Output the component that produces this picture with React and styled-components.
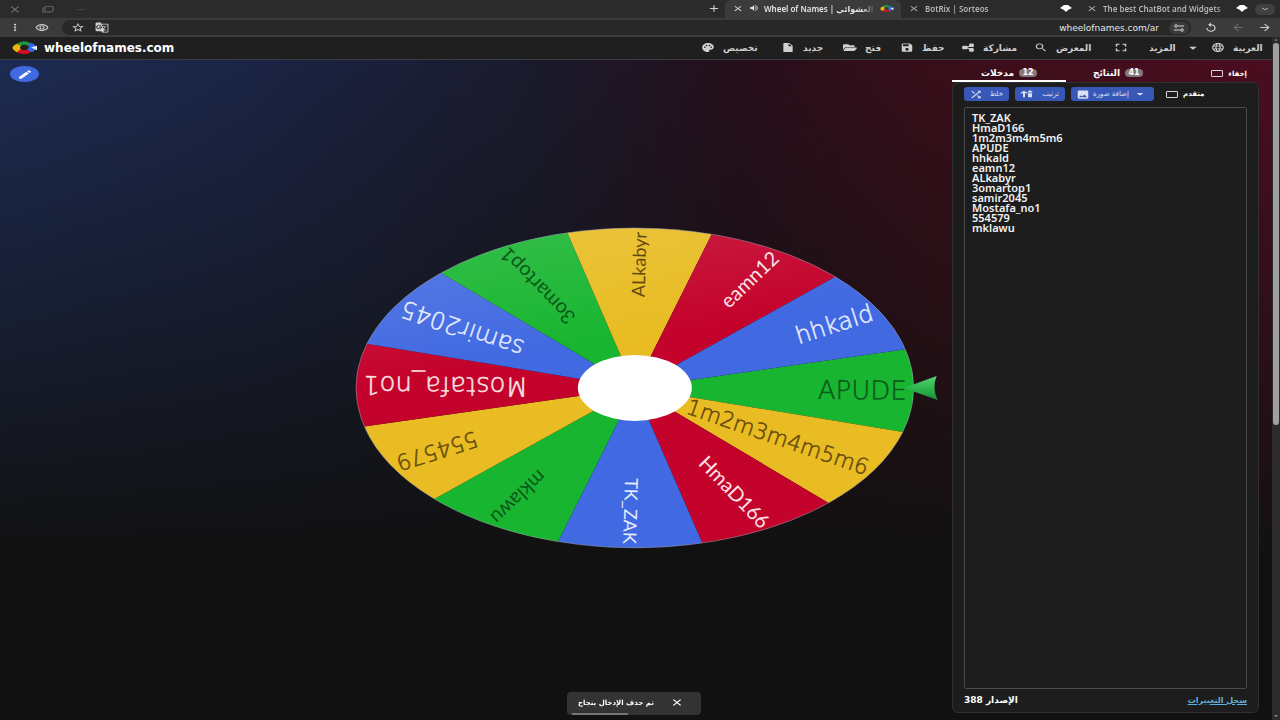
import React from "react";
import styled, { createGlobalStyle } from "styled-components";
import {
  MdPalette,
  MdInsertDriveFile,
  MdSave,
  MdSearch,
  MdFullscreen,
  MdArrowDropDown,
  MdLanguage,
  MdClose,
  MdAdd,
  MdMoreVert,
  MdStarBorder,
  MdArrowBack,
  MdArrowForward,
  MdReplay,
  MdVolumeUp,
  MdKeyboardArrowDown,
  MdShuffle,
  MdImage,
  MdEdit,
  MdOutlineFilterNone,
  MdRemove,
  MdGTranslate,
  MdOutlineRemoveRedEye,
} from "react-icons/md";
import { FaFolderOpen } from "react-icons/fa";

const GlobalStyle = createGlobalStyle`
  * {
    box-sizing: border-box;
  }
  body {
    margin: 0;
    background: #101010;
    color: #fff;
    font-family: "DejaVu Sans", sans-serif;
  }
  button {
    border: 0;
    padding: 0;
    background: none;
    color: inherit;
    font-family: inherit;
  }
`;

const Page = styled.div`
  display: flex;
  flex-direction: column;
  height: 100vh;
  overflow: hidden;
`;

const Icon = styled.span`
  display: inline-flex;
  flex: none;
  width: ${(p) => p.$w || 14}px;
  height: ${(p) => p.$h || 11}px;
  color: ${(p) => p.$color || "inherit"};
  transform: ${(p) => (p.$flip ? "rotate(180deg)" : "none")};
  svg {
    width: 100%;
    height: 100%;
  }
`;

/* browser chrome */

const TabStrip = styled.div`
  display: flex;
  justify-content: space-between;
  height: 18px;
  background: #2b2b2b;
  color: #d0d0d0;
`;

const WindowButtons = styled.div`
  display: flex;
  align-items: center;
  gap: 20px;
  padding-left: 8px;
  color: #707070;
`;

const Tabs = styled.div`
  display: flex;
  align-items: center;
  width: 578px;
`;

const NewTab = styled.button`
  width: 23px;
  height: 16px;
`;

const Tab = styled.div`
  display: flex;
  align-items: center;
  gap: 5px;
  width: ${(p) => p.$w}px;
  height: 18px;
  padding: 0 7px 2px;
  border-radius: 6px 6px 0 0;
  background: ${(p) => (p.$active ? "#3b3b3b" : "transparent")};
  font: 600 8px "Noto Sans", "DejaVu Sans", sans-serif;
  color: ${(p) => (p.$active ? "#e4e4e4" : "#b4b4b4")};
  white-space: nowrap;
`;

const TabTitle = styled.span`
  flex: 1;
  overflow: hidden;
  mask-image: linear-gradient(to right, #000 88%, transparent);
`;

const Chevron = styled.button`
  display: flex;
  align-items: center;
  justify-content: center;
  width: 20px;
  height: 11px;
  border-radius: 6px;
  background: #404040;
`;

const AddressBar = styled.div`
  display: flex;
  align-items: center;
  gap: 13px;
  height: 19px;
  padding: 0 8px;
  background: #3b3b3b;
  color: #d0d0d0;
`;

const Omnibox = styled.div`
  display: flex;
  flex: 1;
  align-items: center;
  gap: 10px;
  height: 15px;
  padding: 0 2px 0 9px;
  border-radius: 8px;
  background: #282828;
`;

const UrlInput = styled.input`
  flex: 1;
  min-width: 0;
  border: 0;
  padding: 0;
  background: none;
  color: #e6e6e6;
  font: 500 9px "DejaVu Sans", sans-serif;
  text-align: right;
`;

const SiteInfo = styled.button`
  display: flex;
  align-items: center;
  justify-content: center;
  width: 20px;
  height: 12px;
  border-radius: 6px;
  background: #3b3b3b;
`;

/* site */

const Site = styled.div`
  display: flex;
  flex: 1;
  min-height: 0;
`;

const Content = styled.div`
  display: flex;
  flex: 1;
  flex-direction: column;
  min-width: 0;
`;

const Header = styled.header`
  display: flex;
  align-items: center;
  justify-content: space-between;
  height: 23px;
  padding: 0 7px 1px 12px;
  border-bottom: 1px solid #3a3a42;
  background: #1f1f1f;
`;

const Brand = styled.a`
  display: flex;
  align-items: center;
  gap: 6px;
  color: #fff;
  font: bold 12px "DejaVu Sans", sans-serif;
  text-decoration: none;
`;

const Menu = styled.nav`
  display: flex;
  align-items: center;
`;

const MenuButton = styled.button`
  display: flex;
  align-items: center;
  gap: 8px;
  width: ${(p) => p.$w}px;
  height: 18px;
  color: #cfcfcf;
  font-size: 9px;
  font-weight: bold;
  white-space: nowrap;
`;

const Stage = styled.main`
  display: grid;
  grid-template-columns: 1fr 44% 1fr;
  flex: 1;
  min-height: 0;
  background:
    linear-gradient(to bottom, transparent, #11111180 260px, #111 500px),
    linear-gradient(to right, #1d2b52, #1b2445 20%, #1a1a2c 42%, #260f1b 58%, #3a0e19 75%, #4c0d20);
`;

const EditButton = styled.button`
  display: flex;
  align-items: center;
  justify-content: center;
  width: 29px;
  height: 16px;
  margin: 6px 0 0 10px;
  border-radius: 50%;
  background: #4169e1;
`;

const WheelSvg = styled.svg`
  align-self: center;
  width: 100%;
  margin-bottom: 4px;
  overflow: visible;
`;

const WheelLabel = styled.text`
  font-family: ${(p) => (p.$steep ? "Lato" : '"DejaVu Sans"')}, sans-serif;
  font-weight: ${(p) => (p.$steep ? 400 : 200)};
  font-size: ${(p) => p.$size}px;
  fill: ${(p) => p.$color};
  stroke: ${(p) => (p.$steep ? "none" : p.$color)};
  stroke-width: 0.5;
`;

const Sidebar = styled.aside`
  display: flex;
  flex-direction: column;
  justify-self: end;
  width: 307px;
  margin: 5px 13px 7px 0;
  min-height: 0;
`;

const SideTabs = styled.div`
  display: flex;
  align-items: center;
  height: 17px;
`;

const SideTab = styled.button`
  display: flex;
  align-items: center;
  justify-content: center;
  gap: 5px;
  width: ${(p) => p.$w}px;
  height: 17px;
  border-bottom: 2px solid ${(p) => (p.$active ? "#fff" : "transparent")};
  font-size: 9px;
  font-weight: bold;
`;

const Badge = styled.span`
  width: 18px;
  height: 8px;
  border-radius: 4px;
  background: #85787c;
  font: bold 8px/8px "DejaVu Sans", sans-serif;
`;

const CheckLabel = styled.label`
  display: flex;
  align-items: center;
  gap: 5px;
  margin-left: ${(p) => (p.$push ? "auto" : "6px")};
  margin-right: ${(p) => (p.$push ? "12px" : "0")};
  font-size: 7px;
  font-weight: bold;
`;

const Checkbox = styled.input`
  appearance: none;
  width: 12px;
  height: 7px;
  margin: 0;
  border: 1px solid #d8d8d8;
  border-radius: 1px;
`;

const Panel = styled.section`
  display: flex;
  flex: 1;
  flex-direction: column;
  min-height: 0;
  padding: 4px 11px 3px;
  border: 1px solid #303030;
  border-radius: 6px;
  background: #1d1d1d;
`;

const Toolbar = styled.div`
  display: flex;
  align-items: center;
  gap: 6px;
`;

const ToolButton = styled.button`
  display: flex;
  align-items: center;
  justify-content: space-between;
  width: ${(p) => p.$w}px;
  height: 14px;
  padding: 0 6px 0 5px;
  border-radius: 3px;
  background: #3858b8;
  color: #dbe2f7;
  font-size: 7px;
  white-space: nowrap;
`;

const Entries = styled.textarea`
  flex: 1;
  min-height: 0;
  margin: 6px 0 0;
  padding: 5px 7px;
  border: 1px solid #4a4a4a;
  border-radius: 2px;
  outline: 0;
  background: #1d1d1d;
  color: #f2f2f2;
  font: 600 11px/10px "Noto Sans", sans-serif;
  resize: none;
`;

const Footer = styled.footer`
  display: flex;
  align-items: center;
  justify-content: space-between;
  height: 18px;
  margin-top: 2px;
  font-size: 9px;
  font-weight: bold;
`;

const ChangeLog = styled.a`
  color: #62b0d8;
  font-size: 8px;
`;

const Scrollbar = styled.div`
  display: flex;
  flex-direction: column;
  align-items: center;
  width: 8px;
  background: #2b2b2b;
  color: #a8a8a8;
`;

const Thumb = styled.div`
  width: 6px;
  height: 56%;
  margin-bottom: auto;
  border-radius: 3px;
  background: #a0a0a0;
`;

const ToastArea = styled.div`
  position: fixed;
  right: 12px;
  bottom: 5px;
  left: 0;
  display: flex;
  justify-content: center;
  pointer-events: none;
`;

const Toast = styled.div`
  display: flex;
  align-items: center;
  justify-content: space-between;
  width: 134px;
  height: 23px;
  padding: 0 17px 2px 11px;
  border-radius: 4px;
  background:
    linear-gradient(#757575, #757575) 5px 21px / 56px 2px no-repeat,
    #333;
  font-size: 7px;
  font-weight: bold;
`;

const GREEN = "#18b530";
const BLUE = "#4169e1";
const RED = "#c4032c";
const YELLOW = "#e8bc22";

const RX = 279;
const RY = 160;

// clockwise, starting under the pointer
const slices = [
  { name: "APUDE", color: GREEN, size: 26 },
  { name: "1m2m3m4m5m6", color: YELLOW, size: 22 },
  { name: "HmaD166", color: RED, size: 20, steep: true },
  { name: "TK_ZAK", color: BLUE, size: 18, steep: true },
  { name: "mklawu", color: GREEN, size: 20, steep: true },
  { name: "554579", color: YELLOW, size: 22 },
  { name: "Mostafa_no1", color: RED, size: 26 },
  { name: "samir2045", color: BLUE, size: 24 },
  { name: "3omartop1", color: GREEN, size: 20, steep: true },
  { name: "ALkabyr", color: YELLOW, size: 18, steep: true },
  { name: "eamn12", color: RED, size: 20, steep: true },
  { name: "hhkald", color: BLUE, size: 24 },
];

const labelColors = {
  [GREEN]: "#0c5a1a",
  [YELLOW]: "#64490c",
  [RED]: "#fbe3e8",
  [BLUE]: "#e6edff",
};

const entries = [
  "TK_ZAK",
  "HmaD166",
  "1m2m3m4m5m6",
  "APUDE",
  "hhkald",
  "eamn12",
  "ALkabyr",
  "3omartop1",
  "samir2045",
  "Mostafa_no1",
  "554579",
  "mklawu",
];

const point = (deg, scale = 1) => {
  const a = (deg * Math.PI) / 180;
  return [RX * scale * Math.cos(a), RY * scale * Math.sin(a)];
};

const slicePath = (deg) => {
  const [x1, y1] = point(deg - 15);
  const [x2, y2] = point(deg + 15);
  return `M0 0L${x1} ${y1}A${RX} ${RY} 0 0 1 ${x2} ${y2}Z`;
};

function Wheel() {
  return (
    <WheelSvg viewBox="-279 -161 560 322" role="img" aria-label="Wheel">
      <defs>
        <linearGradient id="sheen" x1="0.2" y1="0" x2="0.5" y2="1">
          <stop offset="0" stopColor="#fff" stopOpacity="0.12" />
          <stop offset="0.4" stopColor="#fff" stopOpacity="0" />
        </linearGradient>
        <linearGradient id="pointer" x1="0" y1="0" x2="0" y2="1">
          <stop offset="0" stopColor="#5ad077" />
          <stop offset="0.5" stopColor="#2fb850" />
          <stop offset="1" stopColor="#1c8a38" />
        </linearGradient>
      </defs>
      {slices.map((s, i) => (
        <path key={s.name} d={slicePath(1 + i * 30)} fill={s.color} />
      ))}
      <ellipse rx={RX} ry={RY} fill="url(#sheen)" stroke="#9aa3b0" strokeOpacity="0.5" />
      {slices.map((s, i) => {
        const [x, y] = point(1 + i * 30, 0.975);
        const angle = (Math.atan2(y, x) * 180) / Math.PI;
        return (
          <WheelLabel
            key={s.name}
            $size={s.size}
            $steep={s.steep}
            $color={labelColors[s.color]}
            textAnchor="end"
            dominantBaseline="central"
            transform={`translate(${x} ${y}) rotate(${angle})`}
          >
            {s.name}
          </WheelLabel>
        );
      })}
      <ellipse rx="57" ry="33" fill="#fff" />
      <path d="M269 0L302 -12Q297 0 303 12Z" fill="url(#pointer)" />
    </WheelSvg>
  );
}

function Logo({ w = 26, h = 13 }) {
  return (
    <svg width={w} height={h} viewBox="0 0 26 14" preserveAspectRatio="none">
      <path d="M5 3Q11 -2 18 2L16 5Q12 3 9 5Z" fill="#1a9a3c" />
      <path d="M5 3L9 5Q7 7 9 9L5 12Q-4 7 5 3Z" fill="#eeb211" />
      <path d="M5 12L9 9Q12 11 15 9L19 12Q12 16 5 12Z" fill="#d50f25" />
      <path d="M18 2Q24 3 24 7Q24 11 19 12L15 9Q18 7 16 5Z" fill="#3369e8" />
      <path d="M19 7L25 5L25 10Z" fill="#e8eefc" />
    </svg>
  );
}

function BotIcon() {
  return (
    <svg width="12" height="7" viewBox="0 0 12 7">
      <path d="M4 0H8L12 3L8 5L6 7L4 5L0 3Z" fill="#fff" />
    </svg>
  );
}

function ShareIcon(props) {
  return (
    <svg viewBox="0 0 24 24" fill="currentColor" {...props}>
      <rect x="2" y="8" width="9" height="8" rx="2" />
      <path d="M9 12L18 7M9 12L18 17" stroke="currentColor" strokeWidth="2" />
      <rect x="14" y="3" width="8" height="8" rx="2" />
      <rect x="14" y="13" width="8" height="8" rx="2" />
    </svg>
  );
}

function TuneIcon(props) {
  return (
    <svg viewBox="0 0 12 8" fill="none" stroke="currentColor" {...props}>
      <circle cx="3" cy="2" r="1.3" />
      <path d="M5 2H11M1 6H7" />
      <circle cx="9" cy="6" r="1.3" />
    </svg>
  );
}

function SortIcon(props) {
  return (
    <svg viewBox="0 0 14 10" fill="currentColor" {...props}>
      <path d="M4 1L8 4H5V9H3V4H0Z" />
      <path d="M10 0L13 3H7ZM8 4H12V9H8Z" />
    </svg>
  );
}

const menu = [
  { label: "تخصيص", icon: MdPalette, w: 80 },
  { label: "جديد", icon: MdInsertDriveFile, w: 62 },
  { label: "فتح", icon: FaFolderOpen, w: 57 },
  { label: "حفظ", icon: MdSave, w: 61 },
  { label: "مشاركة", icon: ShareIcon, w: 73 },
  { label: "المعرض", icon: MdSearch, w: 78 },
];

function Glyph({ svg: Svg, ...rest }) {
  return (
    <Icon {...rest}>
      <Svg preserveAspectRatio="none" />
    </Icon>
  );
}

function App() {
  return (
    <Page>
      <GlobalStyle />
      <TabStrip>
        <WindowButtons>
          <Glyph svg={MdClose} />
          <Glyph svg={MdOutlineFilterNone} $w={12} $h={7} />
          <Glyph svg={MdRemove} $color="#484848" />
        </WindowButtons>
        <Tabs>
          <NewTab aria-label="New tab">
            <Glyph svg={MdAdd} />
          </NewTab>
          <Tab $active $w={176}>
            <Glyph svg={MdClose} $w={12} $h={9} />
            <Glyph svg={MdVolumeUp} $w={10} $h={8} />
            <TabTitle>Wheel of Names | العشوائي</TabTitle>
            <Logo w={14} h={7} />
          </Tab>
          <Tab $w={178}>
            <Glyph svg={MdClose} $w={12} $h={9} />
            <TabTitle>BotRix | Sorteos</TabTitle>
            <BotIcon />
          </Tab>
          <Tab $w={176}>
            <Glyph svg={MdClose} $w={12} $h={9} />
            <TabTitle>The best ChatBot and Widgets</TabTitle>
            <BotIcon />
          </Tab>
          <Chevron aria-label="Search tabs">
            <Glyph svg={MdKeyboardArrowDown} $w={12} $h={8} />
          </Chevron>
        </Tabs>
      </TabStrip>
      <AddressBar>
        <Glyph svg={MdMoreVert} />
        <Glyph svg={MdOutlineRemoveRedEye} />
        <Omnibox>
          <Glyph svg={MdStarBorder} />
          <Glyph svg={MdGTranslate} />
          <UrlInput aria-label="Address" defaultValue="wheelofnames.com/ar" />
          <SiteInfo aria-label="Site information">
            <Glyph svg={TuneIcon} $w={12} $h={8} />
          </SiteInfo>
        </Omnibox>
        <Glyph svg={MdReplay} />
        <Glyph svg={MdArrowBack} $color="#6c6c6c" />
        <Glyph svg={MdArrowForward} />
      </AddressBar>

      <Site>
        <Content>
          <Header>
            <Brand href="#">
              <Logo />
              wheelofnames.com
            </Brand>
            <Menu>
              {menu.map((m) => (
                <MenuButton key={m.label} $w={m.w}>
                  <Glyph svg={m.icon} $h={m.icon === FaFolderOpen ? 9 : 11} />
                  {m.label}
                </MenuButton>
              ))}
              <MenuButton $w={37} aria-label="Fullscreen">
                <Glyph svg={MdFullscreen} $w={18} $h={13} />
              </MenuButton>
              <MenuButton $w={62}>
                المزيد
                <Glyph svg={MdArrowDropDown} $w={18} $h={14} />
              </MenuButton>
              <MenuButton $w={54}>
                <Glyph svg={MdLanguage} />
                العربية
              </MenuButton>
            </Menu>
          </Header>

          <Stage>
            <EditButton aria-label="Edit">
              <Glyph svg={MdEdit} $w={16} />
            </EditButton>
            <Wheel />
            <Sidebar>
              <SideTabs>
                <SideTab $active $w={114}>
                  مدخلات <Badge>12</Badge>
                </SideTab>
                <SideTab $w={104}>
                  النتائج <Badge>41</Badge>
                </SideTab>
                <CheckLabel $push>
                  <Checkbox type="checkbox" />
                  إخفاء
                </CheckLabel>
              </SideTabs>
              <Panel>
                <Toolbar>
                  <ToolButton $w={45}>
                    <Glyph svg={MdShuffle} />
                    خلط
                  </ToolButton>
                  <ToolButton $w={50}>
                    <Glyph svg={SortIcon} $h={8} />
                    ترتيب
                  </ToolButton>
                  <ToolButton $w={83}>
                    <Glyph svg={MdImage} />
                    إضافة صورة
                    <Glyph svg={MdArrowDropDown} $w={16} $h={12} />
                  </ToolButton>
                  <CheckLabel>
                    <Checkbox type="checkbox" />
                    متقدم
                  </CheckLabel>
                </Toolbar>
                <Entries
                  aria-label="Entries"
                  spellCheck={false}
                  defaultValue={entries.join("\n")}
                />
                <Footer>
                  <span dir="rtl">الإصدار 388</span>
                  <ChangeLog href="#">سجل التغييرات</ChangeLog>
                </Footer>
              </Panel>
            </Sidebar>
          </Stage>
        </Content>
        <Scrollbar>
          <Glyph svg={MdArrowDropDown} $w={8} $h={6} $flip />
          <Thumb />
          <Glyph svg={MdArrowDropDown} $w={8} $h={8} />
        </Scrollbar>
      </Site>

      <ToastArea>
        <Toast role="status">
          <span dir="rtl">تم حذف الإدخال بنجاح</span>
          <Glyph svg={MdClose} />
        </Toast>
      </ToastArea>
    </Page>
  );
}

export default App;
